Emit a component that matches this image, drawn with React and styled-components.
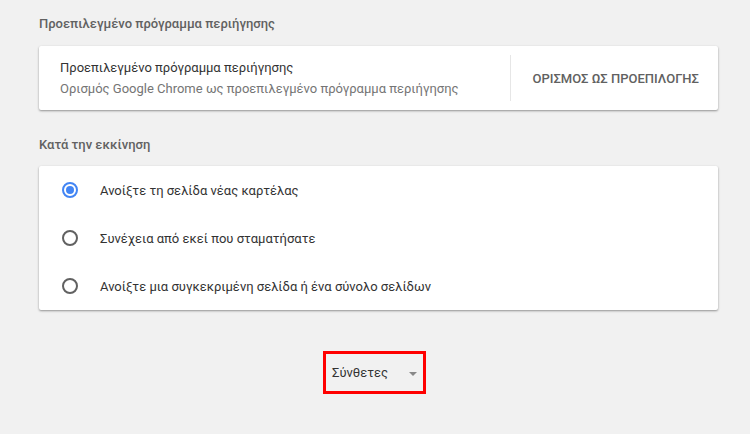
import React, { useState } from "react";
import styled, { createGlobalStyle } from "styled-components";

const Global = createGlobalStyle`
  html, body {
    margin: 0;
    background: #f1f1f1;
    font-family: Roboto, "Noto Sans", sans-serif;
  }
`;

const Page = styled.div`
  width: 750px;
  height: 434px;
  padding: 0 32px 0 39px;
  box-sizing: border-box;
  overflow: hidden;
`;

const Heading = styled.h2`
  margin: 0;
  padding: 16px 0 0;
  height: 46px;
  box-sizing: border-box;
  font-size: 13px;
  line-height: 16px;
  font-weight: 500;
  color: #616161;
`;

const Card = styled.div`
  background: #fff;
  border-radius: 2px;
  box-shadow: 0 1px 2px rgba(0, 0, 0, 0.3), 0 1px 3px rgba(0, 0, 0, 0.12);
`;

const BrowserRow = styled.div`
  display: flex;
  align-items: center;
  height: 64px;
  padding-left: 21px;
`;

const Labels = styled.div`
  flex: 1;
  display: flex;
  flex-direction: column;
  gap: 5px;
`;

const Title = styled.div`
  font-size: 13px;
  line-height: 16px;
  color: #333;
`;

const Subtitle = styled.div`
  font-size: 13px;
  line-height: 16px;
  color: #757575;
`;

const Divider = styled.div`
  width: 1px;
  height: 46px;
  background: #e6e6e6;
`;

const ActionButton = styled.button`
  border: 0;
  background: transparent;
  padding: 0 19px 0 21px;
  height: 64px;
  font-family: inherit;
  font-size: 13px;
  font-weight: 500;
  color: #616161;
  cursor: pointer;
`;

const SecondHeading = styled(Heading)`
  padding-top: 27px;
  height: 56px;
`;

const RadioList = styled.div`
  display: flex;
  flex-direction: column;
`;

const RadioRow = styled.label`
  display: flex;
  align-items: center;
  height: 48px;
  padding-left: 23px;
  cursor: pointer;
`;

const Radio = styled.span`
  width: 12px;
  height: 12px;
  border-radius: 50%;
  border: 2px solid ${(p) => (p.checked ? "#4285f4" : "#616161")};
  position: relative;
  flex: 0 0 auto;

  &::after {
    content: "";
    position: absolute;
    left: 2px;
    top: 2px;
    width: 8px;
    height: 8px;
    border-radius: 50%;
    background: #4285f4;
    display: ${(p) => (p.checked ? "block" : "none")};
  }
`;

const RadioLabel = styled.span`
  margin-left: 22px;
  font-size: 13px;
  color: #333;
`;

const Footer = styled.div`
  display: flex;
  justify-content: center;
  padding-top: 41px;
`;

const Advanced = styled.button`
  display: flex;
  align-items: center;
  width: 103px;
  height: 43px;
  box-sizing: border-box;
  border: 3px solid #ff0000;
  background: transparent;
  padding: 0 0 0 6px;
  margin-left: -8px;
  font-family: inherit;
  font-size: 13px;
  color: #333;
  cursor: pointer;
`;

const Caret = styled.span`
  margin-left: 21px;
  width: 0;
  height: 0;
  border-left: 4px solid transparent;
  border-right: 4px solid transparent;
  border-top: 4px solid #888;
  margin-top: 2px;
`;

const options = [
  "Ανοίξτε τη σελίδα νέας καρτέλας",
  "Συνέχεια από εκεί που σταματήσατε",
  "Ανοίξτε μια συγκεκριμένη σελίδα ή ένα σύνολο σελίδων",
];

export default function App() {
  const [choice, setChoice] = useState(0);

  return (
    <Page>
      <Global />
      <Heading>Προεπιλεγμένο πρόγραμμα περιήγησης</Heading>
      <Card>
        <BrowserRow>
          <Labels>
            <Title>Προεπιλεγμένο πρόγραμμα περιήγησης</Title>
            <Subtitle>
              Ορισμός Google Chrome ως προεπιλεγμένο πρόγραμμα περιήγησης
            </Subtitle>
          </Labels>
          <Divider />
          <ActionButton>ΟΡΙΣΜΟΣ ΩΣ ΠΡΟΕΠΙΛΟΓΗΣ</ActionButton>
        </BrowserRow>
      </Card>

      <SecondHeading>Κατά την εκκίνηση</SecondHeading>
      <Card>
        <RadioList>
          {options.map((o, i) => (
            <RadioRow key={o} onClick={() => setChoice(i)}>
              <Radio checked={choice === i} />
              <RadioLabel>{o}</RadioLabel>
            </RadioRow>
          ))}
        </RadioList>
      </Card>

      <Footer>
        <Advanced>
          Σύνθετες
          <Caret />
        </Advanced>
      </Footer>
    </Page>
  );
}
